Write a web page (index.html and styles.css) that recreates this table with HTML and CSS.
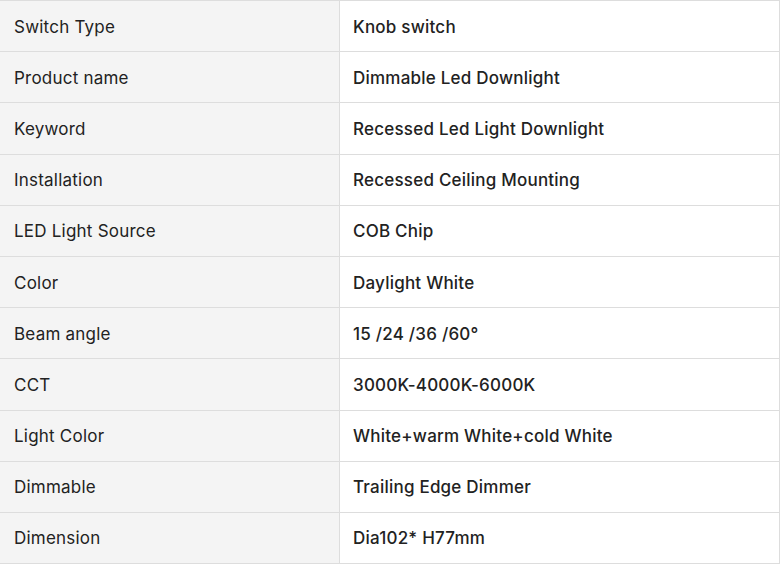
FILE: index.html
```html
<!DOCTYPE html>
<html>
<head>
<meta charset="utf-8">
<link rel="stylesheet" href="styles.css">
</head>
<body>
<div class="spec-table">
  <div class="row"><div class="key">Switch Type</div><div class="val">Knob switch</div></div>
  <div class="row"><div class="key">Product name</div><div class="val">Dimmable Led Downlight</div></div>
  <div class="row"><div class="key">Keyword</div><div class="val">Recessed Led Light Downlight</div></div>
  <div class="row"><div class="key">Installation</div><div class="val">Recessed Ceiling Mounting</div></div>
  <div class="row"><div class="key">LED Light Source</div><div class="val">COB Chip</div></div>
  <div class="row"><div class="key">Color</div><div class="val">Daylight White</div></div>
  <div class="row"><div class="key">Beam angle</div><div class="val">15 /24 /36 /60°</div></div>
  <div class="row"><div class="key">CCT</div><div class="val">3000K-4000K-6000K</div></div>
  <div class="row"><div class="key">Light Color</div><div class="val">White+warm White+cold White</div></div>
  <div class="row"><div class="key">Dimmable</div><div class="val">Trailing Edge Dimmer</div></div>
  <div class="row"><div class="key">Dimension</div><div class="val">Dia102* H77mm</div></div>
</div>
</body>
</html>
```
FILE: styles.css
```css
html, body {
  margin: 0;
  padding: 0;
  background: #ffffff;
}
body {
  font-family: Inter, "Noto Sans", sans-serif;
  font-size: 17px;
  letter-spacing: 0.22px;
  color: #222222;
}
.spec-table {
  width: 779px;
  border-top: 1px solid #dddddd;
  border-right: 1px solid #dddddd;
}
.row {
  display: grid;
  grid-template-columns: 340px 1fr;
  height: 50.2px;
  border-bottom: 1px solid #dddddd;
}
.key {
  background: #f4f4f4;
  padding-left: 14px;
  padding-top: 1px;
  display: flex;
  align-items: center;
  border-right: 1px solid #dddddd;
}
.val {
  padding-left: 13px;
  padding-top: 1px;
  display: flex;
  align-items: center;
  font-weight: 500;
}
```
